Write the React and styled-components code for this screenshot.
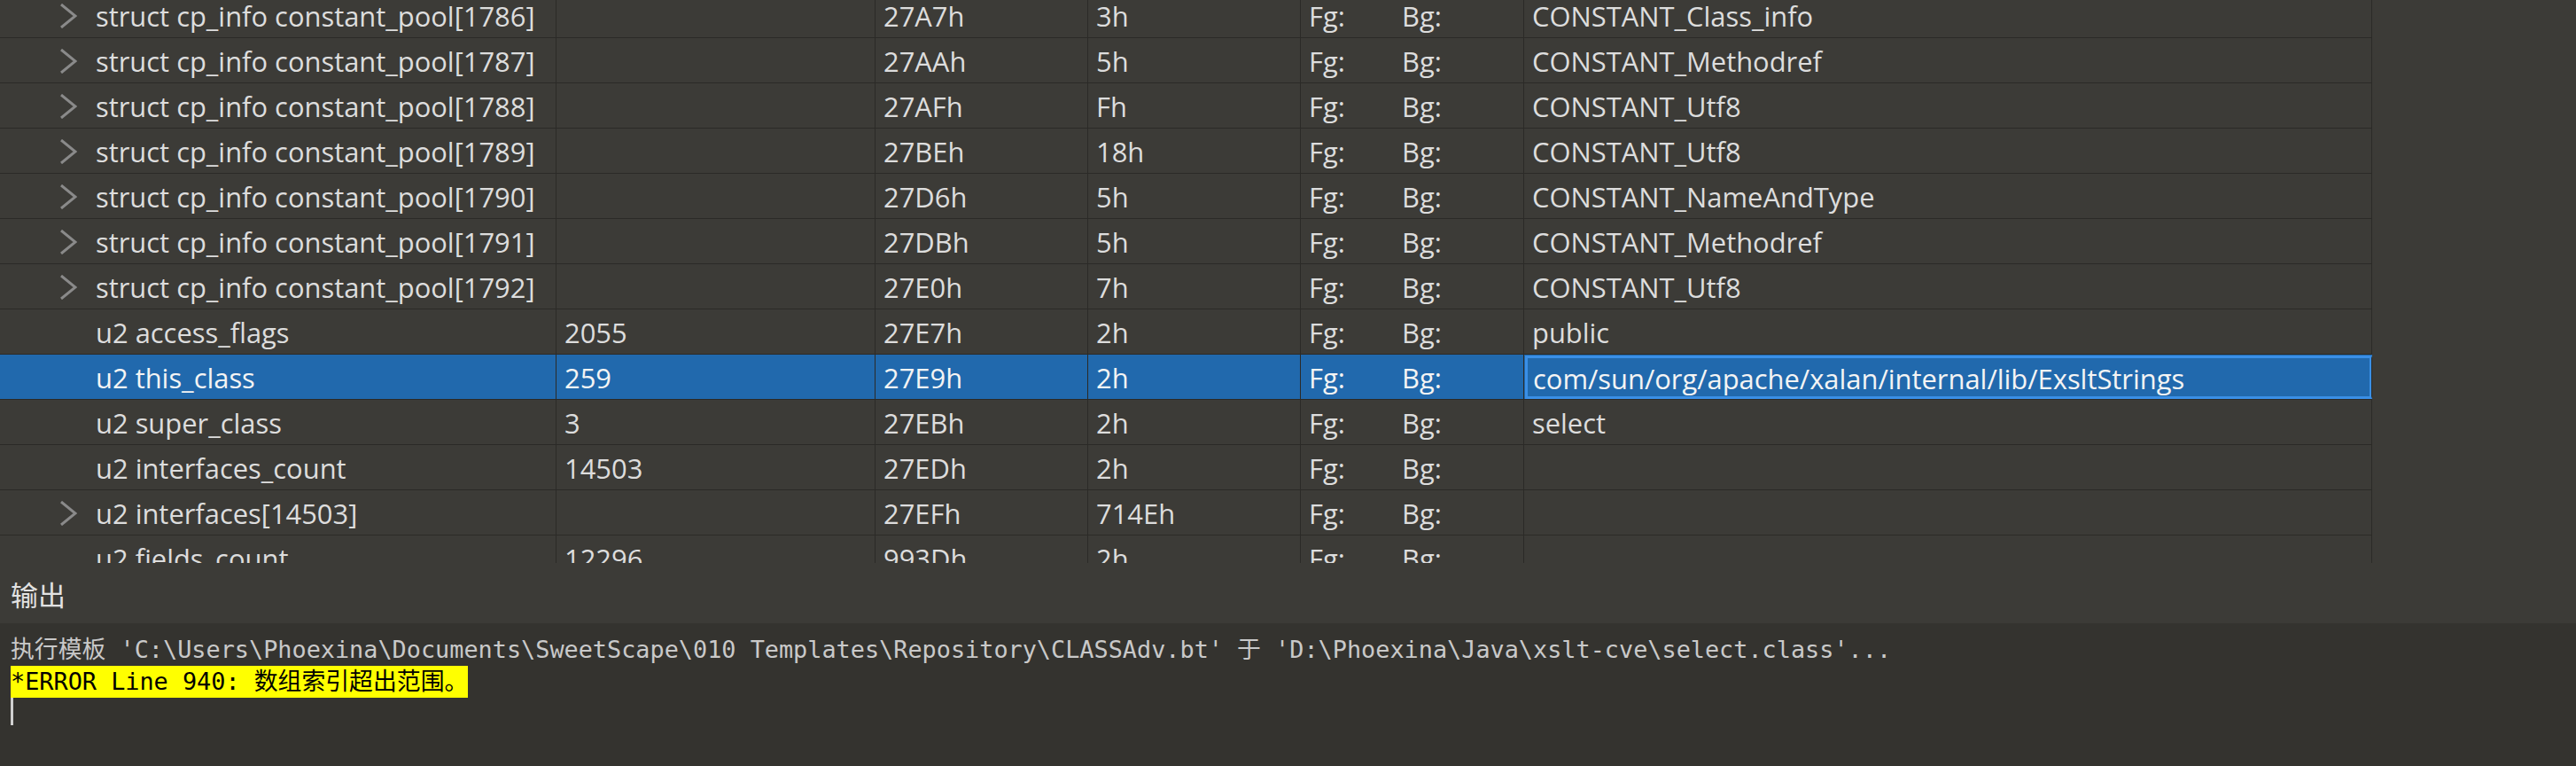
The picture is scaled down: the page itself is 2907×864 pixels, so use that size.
import React from "react";
import styled, { createGlobalStyle } from "styled-components";

const GlobalStyle = createGlobalStyle`
	html, body {
		margin: 0;
		padding: 0;
		background: #3c3b37;
	}
`;

const Page = styled.div`
	display: flex;
	flex-direction: column;
	width: 2907px;
	height: 864px;
	overflow: hidden;
	background: #3c3b37;
	font-family: "Open Sans", "Noto Sans", sans-serif;
`;

const Viewport = styled.div`
	height: 635px;
	overflow: hidden;
	flex-shrink: 0;
`;

const List = styled.div`
	margin-top: -8px;
`;

const Row = styled.div`
	display: grid;
	grid-template-columns: 628px 360px 240px 240px 252px 957px;
	height: 51px;
	width: 2677px;
	background: ${(props) => (props.selected ? "#2169ad" : "transparent")};
	color: ${(props) => (props.selected ? "#f4f4f4" : "#dddddd")};
	border-bottom: 1px solid #2b2a27;
	box-sizing: border-box;
	font-size: 30.9px;
`;

const Cell = styled.div`
	display: flex;
	align-items: center;
	padding-left: 9px;
	padding-top: 2px;
	border-right: 1px solid #2b2a27;
	box-sizing: border-box;
	white-space: nowrap;
	overflow: hidden;
`;

const NameCell = styled(Cell)`
	padding-left: 67px;
`;

const FocusCell = styled(Cell)`
	padding-left: 6px;
	border: 3px solid #3a8fe6;
	border-right: 1px solid #2b2a27;
	box-shadow: inset -2px 0 0 #3a8fe6;
	margin-left: 1px;
	margin-top: 1px;
`;

const Chevron = styled.span`
	display: inline-flex;
	width: 20px;
	margin-right: 21px;
	height: 28px;
	flex-shrink: 0;
`;

const Fg = styled.span`
	width: 105px;
`;

const PanelTitle = styled.div`
	height: 68px;
	display: flex;
	align-items: center;
	padding-left: 12px;
	color: #e2e2e2;
	font-size: 31px;
	font-family: "Noto Sans CJK SC", sans-serif;
	box-sizing: border-box;
	flex-shrink: 0;
`;

const Output = styled.div`
	flex: 1;
	background: #34332f;
	padding: 12px 12px;
	font-family: "DejaVu Sans Mono", "Noto Sans CJK SC", monospace;
	font-size: 26.85px;
	line-height: 36px;
	color: #c9c9c9;
	white-space: pre;
`;

const Line = styled.div`
	height: 36px;
`;

const ErrorMark = styled.span`
	display: inline-block;
	height: 36px;
	background: #ffff00;
	color: #000000;
`;

const Caret = styled.div`
	width: 3px;
	height: 31px;
	background: #d0d0d0;
`;

const rows = [
	{ name: "struct cp_info constant_pool[1786]", tree: true, value: "", start: "27A7h", size: "3h", comment: "CONSTANT_Class_info" },
	{ name: "struct cp_info constant_pool[1787]", tree: true, value: "", start: "27AAh", size: "5h", comment: "CONSTANT_Methodref" },
	{ name: "struct cp_info constant_pool[1788]", tree: true, value: "", start: "27AFh", size: "Fh", comment: "CONSTANT_Utf8" },
	{ name: "struct cp_info constant_pool[1789]", tree: true, value: "", start: "27BEh", size: "18h", comment: "CONSTANT_Utf8" },
	{ name: "struct cp_info constant_pool[1790]", tree: true, value: "", start: "27D6h", size: "5h", comment: "CONSTANT_NameAndType" },
	{ name: "struct cp_info constant_pool[1791]", tree: true, value: "", start: "27DBh", size: "5h", comment: "CONSTANT_Methodref" },
	{ name: "struct cp_info constant_pool[1792]", tree: true, value: "", start: "27E0h", size: "7h", comment: "CONSTANT_Utf8" },
	{ name: "u2 access_flags", value: "2055", start: "27E7h", size: "2h", comment: "public" },
	{ name: "u2 this_class", value: "259", start: "27E9h", size: "2h", comment: "com/sun/org/apache/xalan/internal/lib/ExsltStrings", selected: true },
	{ name: "u2 super_class", value: "3", start: "27EBh", size: "2h", comment: "select" },
	{ name: "u2 interfaces_count", value: "14503", start: "27EDh", size: "2h", comment: "" },
	{ name: "u2 interfaces[14503]", tree: true, value: "", start: "27EFh", size: "714Eh", comment: "" },
	{ name: "u2 fields_count", value: "12296", start: "993Dh", size: "2h", comment: "" },
];

const ChevronIcon = () => (
	<svg width="20" height="28" viewBox="0 0 20 28">
		<polyline points="2,1 18,14 2,27" fill="none" stroke="#8a8a8a" strokeWidth="3" />
	</svg>
);

export default function App() {
	return (
		<Page>
			<GlobalStyle />
			<Viewport>
				<List>
					{rows.map((r) => {
						const Comment = r.selected ? FocusCell : Cell;
						return (
							<Row key={r.start} selected={r.selected}>
								<NameCell>
									<Chevron>{r.tree && <ChevronIcon />}</Chevron>
									{r.name}
								</NameCell>
								<Cell>{r.value}</Cell>
								<Cell>{r.start}</Cell>
								<Cell>{r.size}</Cell>
								<Cell>
									<Fg>Fg:</Fg>
									<span>Bg:</span>
								</Cell>
								<Comment>{r.comment}</Comment>
							</Row>
						);
					})}
				</List>
			</Viewport>
			<PanelTitle>输出</PanelTitle>
			<Output>
				<Line>执行模板 'C:\Users\Phoexina\Documents\SweetScape\010 Templates\Repository\CLASSAdv.bt' 于 'D:\Phoexina\Java\xslt-cve\select.class'...</Line>
				<Line>
					<ErrorMark>*ERROR Line 940: 数组索引超出范围。</ErrorMark>
				</Line>
				<Caret />
			</Output>
		</Page>
	);
}
